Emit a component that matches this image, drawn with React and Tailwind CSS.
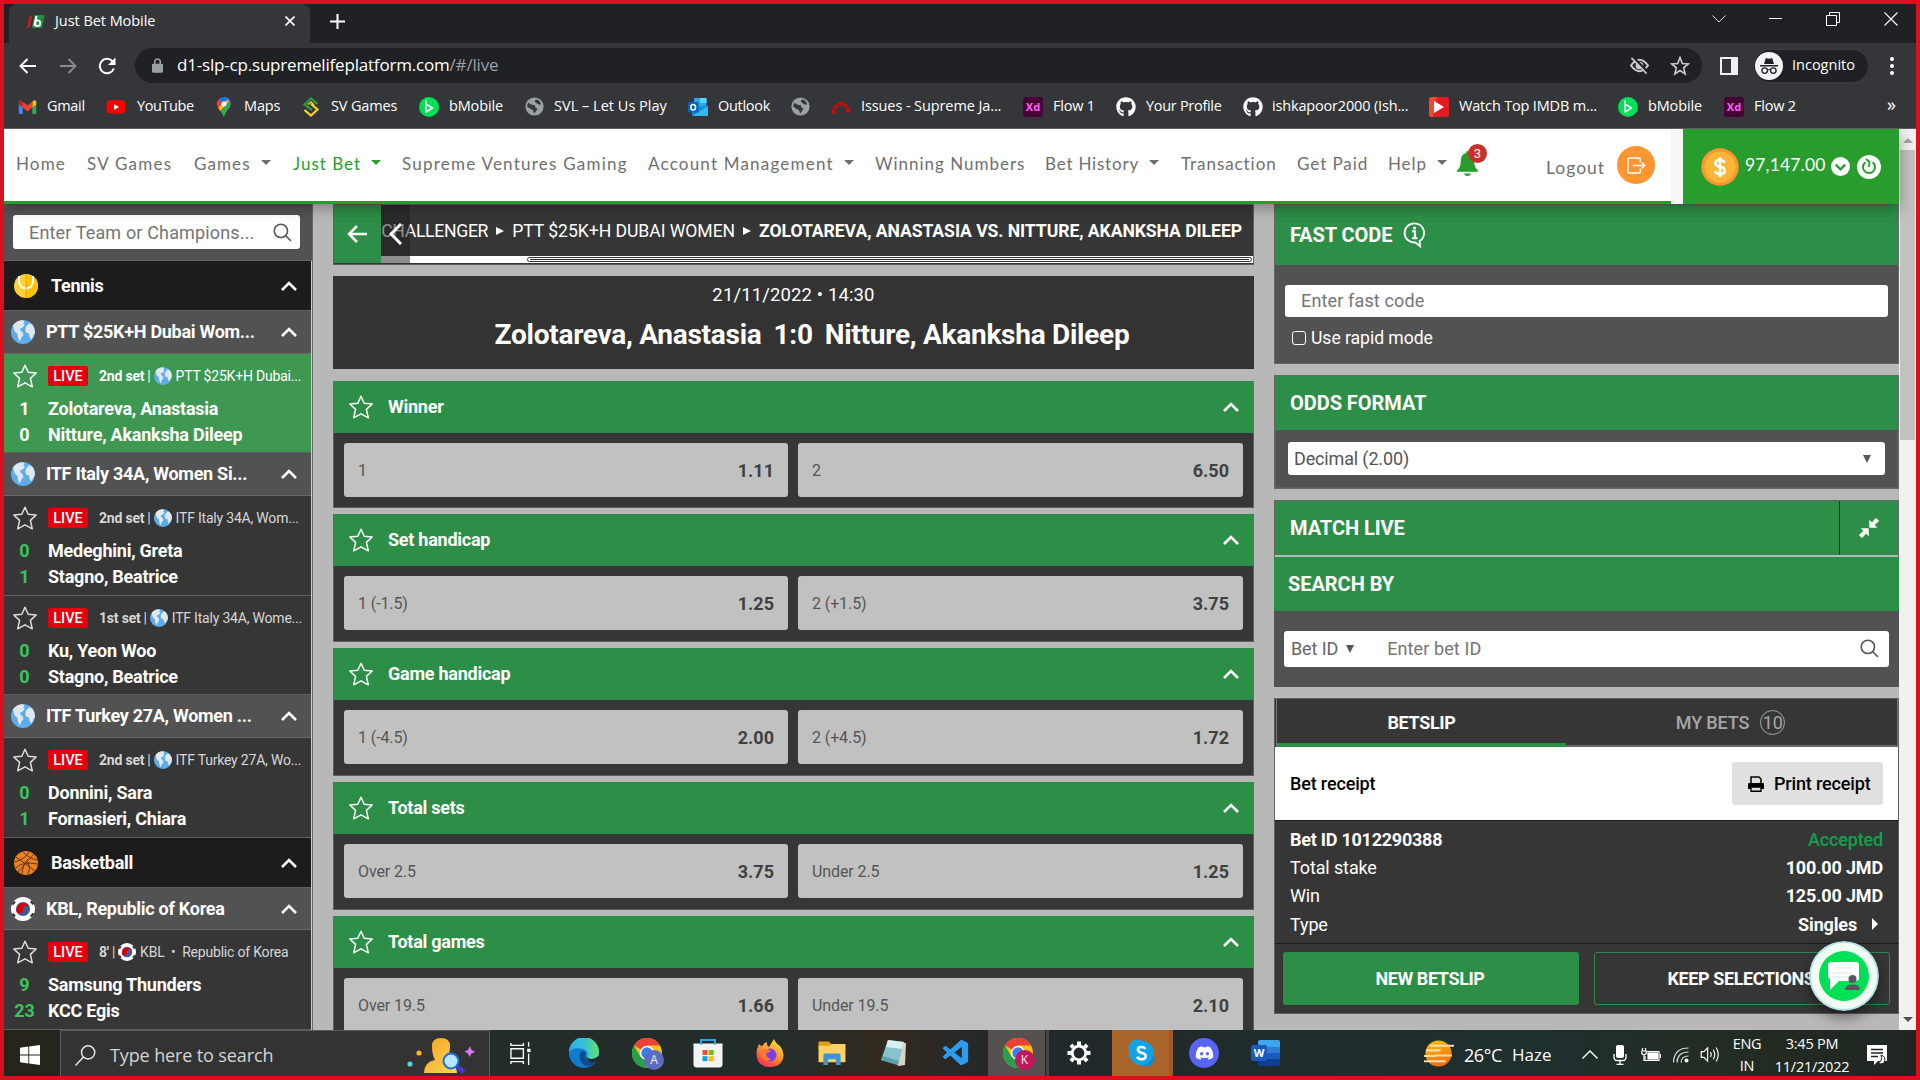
import React from "react";
import { FaGithub, FaDiscord, FaYoutube } from "react-icons/fa";
import { VscVscode } from "react-icons/vsc";

/* ---------- shared glyphs ---------- */

const Star = ({ className = "" }) => (
  <svg viewBox="0 0 26 26" className={"h-[26px] w-[26px] " + className} fill="none" stroke="currentColor" strokeWidth="1.5" strokeLinejoin="round">
    <path d="M13 2.2 L16.2 9.2 L24.2 10 L18.4 15.4 L20.3 23.8 L13 19.8 L5.7 23.8 L7.6 15.4 L1.8 10 L9.8 9.2 Z" />
  </svg>
);

const ChevronUp = () => (
  <svg viewBox="0 0 16 10" className="h-[10px] w-[16px] shrink-0" fill="none" stroke="#fff" strokeWidth="2.6">
    <path d="M1 9 L8 2 L15 9" />
  </svg>
);

const Search = ({ className = "" }) => (
  <svg viewBox="0 0 20 20" className={"h-[19px] w-[19px] " + className} fill="none" stroke="#58595b" strokeWidth="1.7">
    <circle cx="8.3" cy="8.3" r="7" />
    <path d="M13.2 13.2 L19 19" />
  </svg>
);

const Globe = ({ className }) => (
  <svg viewBox="0 0 24 24" className={"shrink-0 " + className}>
    <circle cx="12" cy="12" r="12" fill="#5dadec" />
    <path d="M2 5.5 C4 2 8 0.3 12 0.3 L13.5 1.5 L12.5 3.6 L14 5 L11.5 7.5 L9 8.6 L9.6 10.6 L11.6 12.3 L12.5 15 L10.4 17.6 L9.5 20 L8.5 21.5 L7 17.5 L6.6 14 L3.8 11.4 L2.8 8.6 Z" fill="#e1e8ed" />
    <path d="M15.5 6 L18.5 3 L21.4 4.8 L23.4 8.5 L23.9 13 L22.2 16 L20.4 19.4 L18.6 17 L18 13.6 L15 12.5 L14.2 9 Z" fill="#e1e8ed" />
  </svg>
);

const Korea = ({ className }) => (
  <svg viewBox="0 0 24 24" className={"shrink-0 " + className}>
    <circle cx="12" cy="12" r="12" fill="#fff" />
    <path d="M1.5 7.5 L4 4.6 M19.8 4.2 L22.4 7.4 M1.6 16.6 L4 19.6 M19.9 19.6 L22.4 16.4" stroke="#333" strokeWidth="2.2" />
    <circle cx="12" cy="12" r="7" fill="#3d5a98" />
    <path d="M5.6 15 A7 7 0 0 1 18.8 10.4 A3.6 3.6 0 0 0 12 12 A3.6 3.6 0 0 1 5.6 15 Z" fill="#d80000" />
  </svg>
);

const TennisBall = () => (
  <svg viewBox="0 0 24 24" className="h-6 w-6 shrink-0">
    <circle cx="12" cy="12" r="12" fill="#fdd13a" />
    <path d="M12 0 A12 12 0 0 1 12 24 Z" fill="#fcc400" />
    <path d="M5 2 V8 A7.2 8.5 0 0 0 19 8 V2" fill="none" stroke="#fff" strokeWidth="2" />
    <path d="M12 0 V24" stroke="#d69a00" strokeWidth=".8" />
  </svg>
);

const Basketball = () => (
  <svg viewBox="0 0 24 24" className="h-6 w-6 shrink-0" fill="none" stroke="#5a3210" strokeWidth=".9">
    <circle cx="12" cy="12" r="12" fill="#ea7f27" stroke="none" />
    <path d="M2 6 L21 20 M20 3 L4 21 M9 0.5 Q15 8 23.5 9 M0.5 11 Q12 8 15 0.5 M1.5 17 Q9 10 23.5 13 M8 23 Q9 12 14 8 M14 23.5 Q17 17 14 11" />
  </svg>
);

/* ---------- browser ---------- */

const GmailIcon = () => (
  <svg viewBox="0 0 20 16" className="h-[14px] w-[19px]">
    <path d="M0 2 V14.5 Q0 16 1.5 16 H4.5 V6 Z" fill="#4285f4" />
    <path d="M20 2 V14.5 Q20 16 18.5 16 H15.5 V6 Z" fill="#34a853" />
    <path d="M15.5 2 L17 .7 Q20 -.6 20 2.5 V5 L15.5 8.6 Z" fill="#fbbc04" />
    <path d="M4.5 2 L3 .7 Q0 -.6 0 2.5 V5 L4.5 8.6 Z" fill="#c5221f" />
    <path d="M4.5 2 L10 6.3 L15.5 2 V8.6 L10 13 L4.5 8.6 Z" fill="#ea4335" />
  </svg>
);
const YouTubeIcon = () => <FaYoutube className="h-[20px] w-[20px] text-[#f00] [background:linear-gradient(#fff,#fff)_center/8px_8px_no-repeat]" />;
const MapsIcon = () => (
  <svg viewBox="0 0 14 20" className="ml-[3px] h-[20px] w-[14px]">
    <path d="M7 0 A7 7 0 0 1 13.5 5 L7 10 Z" fill="#4285f4" />
    <path d="M7 0 A7 7 0 0 0 1.4 2.8 L6 7 L11 1.2 Z" fill="#1a73e8" />
    <path d="M1.4 2.8 A7 7 0 0 0 1 10.5 L6.5 5.5 Z" fill="#ea4335" />
    <path d="M1 10.5 Q2 12.3 3.5 14.2 L12 4 L10 3 Z" fill="#fbbc04" />
    <path d="M3.5 14.2 Q5.6 17 7 20 Q8.4 15.5 11 12.5 Q14.8 8.5 13.4 4.6 Z" fill="#34a853" />
    <circle cx="7" cy="7" r="2.5" fill="#fff" />
  </svg>
);
const SvIcon = () => (
  <svg viewBox="0 0 16 20" className="ml-[2px] h-[20px] w-[16px]" fill="none" strokeWidth="2.2">
    <path d="M14.5 7 L8 1.5 L1.5 7.5 L9 13" stroke="#2e9e3d" />
    <path d="M8 7 L14.5 12.5 L8 18.5 L1.5 13" stroke="#ffd21f" />
    <path d="M5 7.5 L8 5 L11 8" stroke="#ffd21f" strokeWidth="1.5" />
  </svg>
);
const BMobileIcon = () => (
  <svg viewBox="0 0 20 20" className="h-5 w-5">
    <circle cx="10" cy="10" r="10" fill="#00e056" />
    <path d="M7 4 V15 L13.5 11 L8.5 8" fill="none" stroke="#fff" strokeWidth="1.5" strokeLinejoin="round" strokeLinecap="round" />
  </svg>
);
const GreyGlobe = () => (
  <svg viewBox="0 0 20 20" className="h-[19px] w-[19px]">
    <circle cx="10" cy="10" r="9.6" fill="#9aa0a6" />
    <path d="M3.5 6 Q7 9 10.5 8.5 Q10 11.5 13 12 Q12 15 9.5 17.5 Q9 13.5 6.5 13 Q3.5 11.5 2 9.5 Z M11 3 Q9.5 5.5 12.5 6.5 Q14 8.5 17 7.5 Q16 4.5 13.5 3 Z" fill="#35363a" />
  </svg>
);
const OutlookIcon = () => (
  <svg viewBox="0 0 20 20" className="h-5 w-5">
    <path d="M6 1 H18.5 V11 H6 Z" fill="#28a8ea" />
    <path d="M12 1 H18.5 V6 H12 Z" fill="#50d9ff" />
    <path d="M4 9 L20 9 V18 Q20 19 19 19 H5 Q4 19 4 18 Z" fill="#1490df" />
    <path d="M20 9 L5 19 H19 Q20 19 20 18 Z" fill="#35b8f1" />
    <rect x="0" y="5" width="10.5" height="10.5" rx="1" fill="#0364b8" />
    <ellipse cx="5.2" cy="10.2" rx="2.4" ry="2.8" fill="none" stroke="#fff" strokeWidth="1.5" />
  </svg>
);
const RedmineIcon = () => (
  <svg viewBox="0 0 20 20" className="h-5 w-5" fill="none" stroke="#c80d0d" strokeWidth="4">
    <path d="M2.2 16.5 A7.9 11.5 0 0 1 17.8 16.5" strokeDasharray="4.2 1.2" />
  </svg>
);
const XdIcon = () => (
  <span className="flex h-5 w-5 items-center justify-center rounded-[3px] bg-[#470137] font-['Open_Sans'] text-[11px] leading-none font-bold text-[#ff61f6]">Xd</span>
);
const GitHubIcon = () => <FaGithub className="h-5 w-5 text-white" />;
const PlayIcon = () => (
  <svg viewBox="0 0 20 20" className="h-5 w-5">
    <rect width="20" height="20" rx="2.5" fill="#e51b23" />
    <path d="M0 3 Q0 0 3 0 H8 L4 20 H3 Q0 20 0 17Z" fill="#f0492c" />
    <path d="M5 4 L15 10 L5 16 Z" fill="#fff" />
  </svg>
);

const bookmarks = [
  ["w-[88px]", GmailIcon, "Gmail", "ml-[10px] tracking-[-0.3px]"],
  ["w-[108px]", YouTubeIcon, "YouTube", "ml-[11px] tracking-[-0.4px]"],
  ["w-[87px]", MapsIcon, "Maps", "ml-[13px] tracking-[-0.15px]"],
  ["w-[118px]", SvIcon, "SV Games", "ml-[12px] tracking-[-0.15px]"],
  ["w-[106px]", BMobileIcon, "bMobile", "ml-[10px] tracking-[-0.15px]"],
  ["w-[163px]", GreyGlobe, "SVL – Let Us Play", "ml-[10px] tracking-[0.02px]"],
  ["w-[103px]", OutlookIcon, "Outlook", "ml-[10px] tracking-[-0.3px]"],
  ["w-[40px]", GreyGlobe, "", ""],
  ["w-[192px]", RedmineIcon, "Issues - Supreme Ja...", "ml-[10px] tracking-[-0.1px]"],
  ["w-[93px]", XdIcon, "Flow 1", "ml-[10px] tracking-[-0.2px]"],
  ["w-[127px]", GitHubIcon, "Your Profile", "ml-[10px] tracking-[-0.3px]"],
  ["w-[186px]", GitHubIcon, "ishkapoor2000 (Ish...", "ml-[9px] tracking-[-0.17px]"],
  ["w-[189px]", PlayIcon, "Watch Top IMDB m...", "ml-[10px] tracking-[-0.17px]"],
  ["w-[106px]", BMobileIcon, "bMobile", "ml-[10px] tracking-[-0.15px]"],
  ["w-[163px]", XdIcon, "Flow 2", "ml-[10px] tracking-[-0.2px]"],
];

const JbIcon = () => (
  <svg viewBox="0 0 20 14" className="h-[13px] w-[19px]">
    <path d="M9 0 H20 L17 14 H6 Z" fill="#1d8f45" />
    <path d="M5 1 L3 11 Q2.5 13 0.5 13" fill="none" stroke="#e3131f" strokeWidth="2.4" />
    <path d="M11 1 L9 12" stroke="#fff" strokeWidth="2.4" />
    <ellipse cx="12.3" cy="8.8" rx="2.8" ry="3" fill="none" stroke="#fff" strokeWidth="2" />
  </svg>
);

function Browser() {
  return (
    <div className="shrink-0 font-['Open_Sans','Noto_Sans',sans-serif] text-white">
      <div className="flex h-[39px] items-stretch justify-between bg-[#202124]">
        <div className="flex">
          <div className="ml-[5px] flex w-[301px] items-center rounded-t-lg bg-[#35363a] pb-[5px] pl-[17px]">
            <JbIcon />
            <span className="ml-[10px] w-[230px] text-[14.5px] tracking-[-0.05px]">Just Bet Mobile</span>
            <svg viewBox="0 0 10 10" className="h-[10px] w-[10px]" stroke="#fff" strokeWidth="1.6">
              <path d="M.5 .5 L9.5 9.5 M9.5 .5 L.5 9.5" />
            </svg>
          </div>
          <svg viewBox="0 0 14 14" className="mt-[10px] ml-[20px] h-[15px] w-[15px]" stroke="#fff" strokeWidth="1.9">
            <path d="M7 0 V14 M0 7 H14" />
          </svg>
        </div>
        <div className="mt-[7px] flex h-[15px] items-center pr-[18px]">
          <svg viewBox="0 0 14 8" className="mr-[43px] h-[8px] w-[14px]" fill="none" stroke="#ddd"><path d="M.5 .5 L7 7 L13.5 .5" /></svg>
          <div className="mr-[44px] h-px w-[13px] bg-white" />
          <svg viewBox="0 0 14 14" className="mr-[44px] h-[14px] w-[14px]" fill="none" stroke="#fff"><path d="M.5 3.5 H10.5 V13.5 H.5 Z M3.5 3.5 V.5 H13.5 V10.5 H10.5" /></svg>
          <svg viewBox="0 0 14 14" className="h-[14px] w-[14px]" stroke="#fff" strokeWidth="1.1"><path d="M.5 .5 L13.5 13.5 M13.5 .5 L.5 13.5" /></svg>
        </div>
      </div>
      <div className="flex h-[45px] items-center bg-[#35363a]">
        <svg viewBox="0 0 17 16" className="ml-[15px] h-[16px] w-[17px]" fill="none" stroke="#fff" strokeWidth="1.9"><path d="M17 8 H1.5 M8.5 1 L1.5 8 L8.5 15" /></svg>
        <svg viewBox="0 0 17 16" className="ml-[24px] h-[16px] w-[17px]" fill="none" stroke="#8a8b8e" strokeWidth="1.9"><path d="M0 8 H15.5 M8.5 1 L15.5 8 L8.5 15" /></svg>
        <svg viewBox="0 0 18 18" className="ml-[21px] h-[18px] w-[18px]" fill="none" stroke="#fff" strokeWidth="2"><path d="M15.8 11.5 A7.2 7.2 0 1 1 14.4 4.2 L16 6" /><path d="M17.5 .5 V8 H10 Z" fill="#fff" stroke="none" /></svg>
        <div className="ml-[19px] flex h-[35px] w-[1567px] items-center rounded-full bg-[#202124] pl-[17px]">
          <svg viewBox="0 0 12 16" className="h-[15px] w-[11px] shrink-0"><rect x="0" y="6" width="12" height="10" rx="1.5" fill="#9aa0a6" /><path d="M3 7 V4 A3 3 0 0 1 9 4 V7" fill="none" stroke="#9aa0a6" strokeWidth="1.7" /></svg>
          <span className="ml-[14px] w-[1453px] shrink-0 pb-px text-[17px] tracking-[-0.19px]">d1-slp-cp.supremelifeplatform.com<span className="text-[#9aa0a6]">/#/live</span></span>
          <svg viewBox="0 0 20 18" className="h-[17px] w-[19px] shrink-0" fill="none" stroke="#c8cacd" strokeWidth="2.2"><path d="M1 9 Q10 -3 19 9 Q10 21 1 9 Z" /><circle cx="10" cy="9" r="3" fill="#c8cacd" /><path d="M3 0 L19 16" stroke="#202124" strokeWidth="2.5" /><path d="M1.5 1 L17.5 17.5" strokeWidth="1.8" /></svg>
          <svg viewBox="0 0 24 24" className="ml-[21px] h-[20px] w-[20px] shrink-0" fill="none" stroke="#c8cacd" strokeWidth="2"><path d="M12 2 L14.8 9 L22 9.5 L16.4 14.2 L18.2 21.5 L12 17.5 L5.8 21.5 L7.6 14.2 L2 9.5 L9.2 9 Z" /></svg>
        </div>
        <div className="ml-[18px] h-[18px] w-[18px] border-[2.5px] border-r-[7px] border-[#f1f1f1]" />
        <div className="ml-[15px] flex h-[34px] w-[116px] items-center rounded-full border border-[#3c3d41] bg-[#202124] pl-[1px]">
          <svg viewBox="0 0 28 28" className="h-[28px] w-[28px] shrink-0"><circle cx="14" cy="14" r="14" fill="#f1f3f4" /><path d="M5 13 H23 V14.6 H5 Z M9 12 L10.8 6 Q14 7.5 17.2 6 L19 12 Z" fill="#202124" /><circle cx="9.7" cy="18.6" r="2.8" fill="none" stroke="#202124" strokeWidth="1.3" /><circle cx="18.3" cy="18.6" r="2.8" fill="none" stroke="#202124" strokeWidth="1.3" /><path d="M12.5 18 Q14 17.2 15.5 18" stroke="#202124" fill="none" /></svg>
          <span className="ml-[9px] pb-0.5 text-[14.5px] tracking-[0px]">Incognito</span>
        </div>
        <div className="ml-[21px] flex flex-col gap-[3px]"><i className="h-[4px] w-[4px] rounded-full bg-white" /><i className="h-[4px] w-[4px] rounded-full bg-white" /><i className="h-[4px] w-[4px] rounded-full bg-white" /></div>
      </div>
      <div className="flex h-[41px] items-center border-b border-[#5b5c5f] bg-[#35363a] pb-[3px] pl-[14px]">
        {bookmarks.map(([w, Icon, label, text], i) => (
          <div key={i} className={"flex shrink-0 items-center " + w}>
            <Icon />
            <span className={"pb-0.5 text-[14.5px] whitespace-nowrap " + text}>{label}</span>
          </div>
        ))}
        <span className="pb-1.5 text-[18px] leading-none">»</span>
      </div>
    </div>
  );
}

/* ---------- site navigation ---------- */

const nav = [
  ["Home", "w-[71px] tracking-[1.15px]"],
  ["SV Games", "w-[107px] tracking-[1.25px]"],
  ["Games", "w-[99px] tracking-[1.1px]", 1],
  ["Just Bet", "w-[109px] tracking-[1px]", 1, 1],
  ["Supreme Ventures Gaming", "w-[246px] tracking-[1.23px]"],
  ["Account Management", "w-[227px] tracking-[1.2px]", 1],
  ["Winning Numbers", "w-[170px] tracking-[0.98px]"],
  ["Bet History", "w-[136px] tracking-[0.8px]", 1],
  ["Transaction", "w-[116px] tracking-[0.93px]"],
  ["Get Paid", "w-[91px] tracking-[0.95px]"],
  ["Help", "w-[70px] tracking-[0.9px]", 1],
];

function SiteNav() {
  return (
    <div className="relative z-10 flex h-[75px] shrink-0 bg-[#f6f6f6] font-['Lato','Open_Sans',sans-serif] text-[17px] tracking-[0.75px] text-[#6f6f6f] shadow-[0_3px_14px_rgba(0,0,0,.35)]">
      <div className="flex w-[1667px] items-center border-b-[3px] border-[#289d2e] bg-white pl-[12px]">
        {nav.map(([t, w, caret, active]) => (
          <div key={t} className={"flex shrink-0 items-center pb-[2px] whitespace-nowrap " + w + (active ? " text-[#289d2e]" : "")}>
            <span>{t}</span>
            {caret && <i className="mt-[-3px] ml-[10px] border-x-[5px] border-t-[5px] border-x-transparent border-t-current" />}
          </div>
        ))}
        <div className="relative -ml-px h-[28px] w-[22px] shrink-0 self-center">
          <svg viewBox="0 0 20 24" className="h-[25px] w-[21px]" fill="#289d2e"><path d="M10 0 Q11.5 0 11.5 2 Q16.5 3.5 16.5 10 Q16.5 16 20 18.5 V20 H0 V18.5 Q3.5 16 3.5 10 Q3.5 3.5 8.5 2 Q8.5 0 10 0 Z M6.5 21.5 H13.5 Q12.5 24 10 24 Q7.5 24 6.5 21.5Z" /></svg>
          <span className="absolute -top-[7px] left-[11px] flex h-[19px] w-[19px] items-center justify-center rounded-full bg-[#c9302c] font-[Roboto] text-[13px] tracking-normal text-white">3</span>
        </div>
        <span className="mt-[6px] ml-[67px] w-[71px] shrink-0 text-[17.5px] tracking-[1px]">Logout</span>
        <div className="flex h-[38px] w-[38px] shrink-0 items-center justify-center rounded-full bg-[#fd9530]">
          <svg viewBox="0 0 20 18" className="h-[17px] w-[19px]" fill="none" stroke="#fff" strokeWidth="1.5" strokeLinejoin="round"><path d="M14 5.5 V2.5 Q14 1 12.5 1 H2.5 Q1 1 1 2.5 V15.5 Q1 17 2.5 17 H12.5 Q14 17 14 15.5 V12.5 M6 9 H18.5 M15.5 5.8 L18.7 9 L15.5 12.2" /></svg>
        </div>
      </div>
      <div className="ml-[12px] flex w-[216px] items-center bg-[#289d2e] pl-[18px] text-white">
        <svg viewBox="0 0 38 38" className="h-[38px] w-[38px]"><circle cx="19" cy="19" r="18.7" fill="#fd9530" /><circle cx="19" cy="19" r="15.5" fill="#ffb636" /><path d="M23.5 14.8 Q22.5 12 19 12 Q14.5 12 14.5 15.3 Q14.5 18.3 19 18.9 Q23.7 19.5 23.7 22.8 Q23.7 26.2 19 26.2 Q15 26.2 14 23 M19 9 V29" fill="none" stroke="#fff" strokeWidth="2.6" /></svg>
        <span className="ml-[6px] w-[86px] pb-0.5 text-[17.5px] tracking-[0.15px]">97,147.00</span>
        <svg viewBox="0 0 20 20" className="h-[19px] w-[19px]"><circle cx="10" cy="10" r="10" fill="#fff" /><path d="M5 8 L10 13 L15 8" stroke="#289d2e" strokeWidth="2.4" fill="none" /></svg>
        <svg viewBox="0 0 24 24" className="ml-[7px] h-[24px] w-[24px]"><circle cx="12" cy="12" r="12" fill="#fff" /><path d="M15.5 7.2 A6 6 0 1 1 8.5 7.2" stroke="#289d2e" strokeWidth="2" fill="none" /><path d="M9 4 L12.5 7 L12 12" fill="none" stroke="#289d2e" strokeWidth="1.8" /></svg>
      </div>
    </div>
  );
}

/* ---------- left column ---------- */

const SportRow = ({ icon, title }) => (
  <div className="flex h-[50px] items-center justify-between border-b border-[#5f5f5f] bg-[#1c1c1c] pr-[14px] pl-[10px]">
    <div className="flex items-center gap-[13px]">
      {icon}
      <span className="pb-px text-[18px] font-bold tracking-[-0.3px]">{title}</span>
    </div>
    <ChevronUp />
  </div>
);

const LeagueRow = ({ icon, title, h = "h-[43px]" }) => (
  <div className={"flex items-center justify-between border-b border-[#666] bg-[#525252] pr-[14px] pl-[7px] " + h}>
    <div className="flex items-center gap-[11px]">
      {icon}
      <span className="pb-px text-[18px] font-bold tracking-[-0.28px] whitespace-nowrap">{title}</span>
    </div>
    <ChevronUp />
  </div>
);

const MatchRow = ({ period, flag, league, teams, active, h = "h-[100px]" }) => (
  <div className={"flex flex-col border-b border-[#5f5f5f] pt-[8px] " + h + (active ? " bg-[#3e9852]" : " bg-[#363636]")}>
    <div className="flex h-[28px] items-center pl-[8px]">
      <Star className={active ? "text-white" : "text-[#ddd]"} />
      <span className="ml-[10px] flex h-[20px] w-[40px] items-center justify-center rounded-[2px] bg-[#e2000f] pt-px text-[14.5px] font-medium">LIVE</span>
      <span className={"ml-[11px] flex items-center text-[14px] tracking-[-0.2px] whitespace-nowrap " + (active ? "text-white" : "text-[#d6d6d6]")}>
        <b className="mr-[3px] font-bold">{period}</b>|<span className="mr-[4px] ml-[3px]">{flag}</span>{league}
      </span>
    </div>
    <div className="mt-[5px]">
      {teams.map(([s, n]) => (
        <div key={n} className="flex h-[26px] items-center text-[18px] font-bold">
          <span className={"w-[41px] text-center " + (active ? "text-white" : "text-[#3ac45e]")}>{s}</span>
          <span className="ml-[3px] tracking-[-0.24px]">{n}</span>
        </div>
      ))}
    </div>
  </div>
);

function Sidebar() {
  const g = <Globe className="h-6 w-6" />;
  const gs = <Globe className="h-[18px] w-[18px]" />;
  return (
    <div className="flex w-[309px] shrink-0 flex-col border-r border-[#666] bg-[#525252]">
      <div className="h-[57px] shrink-0 border-b border-[#666] pt-[11px] pl-[9px]">
        <div className="flex h-[34px] w-[287px] items-center justify-between rounded-[3px] bg-white pr-[8px] pl-[16px] text-[18px] text-[#757575]">
          <span className="tracking-[0.15px]">Enter Team or Champions...</span>
          <Search />
        </div>
      </div>
      <div className="w-[308px] border-r border-[#ccc]">
        <SportRow icon={<TennisBall />} title="Tennis" />
        <LeagueRow icon={g} title="PTT $25K+H Dubai Wom..." />
        <MatchRow active h="h-[99px]" period="2nd set" flag={gs} league="PTT $25K+H Dubai..." teams={[["1", "Zolotareva, Anastasia"], ["0", "Nitture, Akanksha Dileep"]]} />
        <LeagueRow icon={g} title="ITF Italy 34A, Women Si..." />
        <MatchRow period="2nd set" flag={gs} league="ITF Italy 34A, Wom..." teams={[["0", "Medeghini, Greta"], ["1", "Stagno, Beatrice"]]} />
        <MatchRow h="h-[99px]" period="1st set" flag={gs} league="ITF Italy 34A, Wome..." teams={[["0", "Ku, Yeon Woo"], ["0", "Stagno, Beatrice"]]} />
        <LeagueRow icon={g} title="ITF Turkey 27A, Women ..." />
        <MatchRow period="2nd set" flag={gs} league="ITF Turkey 27A, Wo..." teams={[["0", "Donnini, Sara"], ["1", "Fornasieri, Chiara"]]} />
        <SportRow icon={<Basketball />} title="Basketball" />
        <LeagueRow h="h-[42px]" icon={<Korea className="h-6 w-6" />} title="KBL, Republic of Korea" />
        <MatchRow period="8'" flag={<Korea className="h-[18px] w-[18px]" />} league={<span>KBL&nbsp; •&nbsp; Republic of Korea</span>} teams={[["9", "Samsung Thunders"], ["23", "KCC Egis"]]} />
      </div>
    </div>
  );
}

/* ---------- centre column ---------- */

const Odd = ({ label, value, w }) => (
  <div className={"flex h-[54px] items-center justify-between rounded-[3px] bg-[#c1c1c1] pr-[14px] pl-[14px] text-[#454545] " + w}>
    <span className="pt-px text-[16px] tracking-[-0.1px] text-[#555]">{label}</span>
    <span className="pt-px text-[18px] font-bold text-[#404040]">{value}</span>
  </div>
);

const Market = ({ title, a, b, h = "h-[128px]" }) => (
  <div className={"mb-[6px] shrink-0 border border-[#5f5f5f] bg-[#363636] " + h}>
    <div className="-mx-px -mt-px flex h-[52px] items-center justify-between bg-[#2d8e47] pr-[15px] pl-[15px]">
      <div className="flex items-center">
        <Star className="text-white" />
        <span className="ml-[14px] pb-px text-[18px] font-bold tracking-[-0.25px]">{title}</span>
      </div>
      <ChevronUp />
    </div>
    <div className="flex gap-[10px] pt-[10px] pl-[10px]">
      <Odd w="w-[444px]" label={a[0]} value={a[1]} />
      <Odd w="w-[445px]" label={b[0]} value={b[1]} />
    </div>
  </div>
);

const Arrow = () => <i className="mx-[8px] border-y-[4.5px] border-l-[8px] border-y-transparent border-l-white" />;

function Center() {
  return (
    <div className="ml-[20px] flex w-[921px] shrink-0 flex-col">
      <div className="flex h-[61px] shrink-0 border border-[#5f5f5f] bg-[#363636]">
        <div className="flex h-[58px] w-[47px] shrink-0 items-center justify-center bg-[#2d8e47] pr-px">
          <svg viewBox="0 0 20 18" className="h-[18px] w-[20px]" fill="none" stroke="#fff" strokeWidth="2.5"><path d="M20 9 H2 M10 1 L2 9 L10 17" /></svg>
        </div>
        <div className="relative flex h-[58px] flex-1 flex-col justify-between overflow-hidden">
          <div className="flex h-[51px] items-center justify-end pt-px pr-[11px] text-[17.6px] tracking-[-0.05px] whitespace-nowrap">
            <span className="tracking-[-0.3px]">CHALLENGER</span><Arrow /><span>PTT $25K+H DUBAI WOMEN</span><Arrow /><b className="tracking-[-0.07px]">ZOLOTAREVA, ANASTASIA VS. NITTURE, AKANKSHA DILEEP</b>
          </div>
          <div className="flex h-[7px] items-center justify-end bg-white pr-px">
            <div className="flex h-[5px] w-[725px] items-center rounded-full border border-[#333] bg-white px-[2px]"><i className="h-px w-full bg-[#333]" /></div>
          </div>
          <div className="absolute inset-y-0 left-0 flex w-[29px] items-center justify-center bg-[#1e1e1e]/50">
            <svg viewBox="0 0 13 22" className="h-[22px] w-[13px]" fill="none" stroke="#fff" strokeWidth="3"><path d="M12 1 L2 11 L12 21" /></svg>
          </div>
        </div>
      </div>
      <div className="mt-[11px] flex h-[93px] shrink-0 flex-col items-center bg-[#333]">
        <span className="mt-[6px] text-[18.5px] leading-[27px] tracking-[0.13px]">21/11/2022 • 14:30</span>
        <span className="mt-[9px] flex gap-[12px] pl-[37px] text-[28px] leading-[34px] font-bold tracking-[-0.27px] whitespace-nowrap"><span>Zolotareva, Anastasia</span><span>1:0</span><span>Nitture, Akanksha Dileep</span></span>
      </div>
      <div className="mt-[12px] flex flex-col">
        <Market h="h-[127px]" title="Winner" a={["1", "1.11"]} b={["2", "6.50"]} />
        <Market title="Set handicap" a={["1 (-1.5)", "1.25"]} b={["2 (+1.5)", "3.75"]} />
        <Market title="Game handicap" a={["1 (-4.5)", "2.00"]} b={["2 (+4.5)", "1.72"]} />
        <Market title="Total sets" a={["Over 2.5", "3.75"]} b={["Under 2.5", "1.25"]} />
        <Market title="Total games" a={["Over 19.5", "1.66"]} b={["Under 19.5", "2.10"]} />
      </div>
    </div>
  );
}

/* ---------- right column ---------- */

const Head = ({ children, className = "" }) => (
  <div className={"flex items-center bg-[#2d8e47] text-[20px] font-bold tracking-[-0.05px] " + className}>{children}</div>
);

const Triangle = () => <i className="border-x-[4.5px] border-t-[8px] border-x-transparent border-t-[#555]" />;

const ReceiptRow = ({ label, value, strong, green }) => (
  <div className="flex h-[28.3px] items-center justify-between text-[18px]">
    <span className={strong ? "font-bold tracking-[-0.25px]" : "tracking-[-0.12px]"}>{label}</span>
    <span className={"flex items-center font-bold tracking-[-0.15px] " + (green ? "!font-medium text-[#12a04b]" : "")}>{value}</span>
  </div>
);

function Right() {
  return (
    <div className="ml-[20px] flex w-[625px] shrink-0 flex-col">
      <div className="h-[160px] shrink-0 border border-[#666] bg-[#525252]">
        <Head className="h-[60px] pl-[15px]">
          FAST CODE
          <svg viewBox="0 0 24 28" className="ml-[11px] h-[26px] w-[23px]" fill="none" stroke="#fff" strokeWidth="2"><path d="M12 1.5 A10.3 10.3 0 1 0 13 22 L18 26 L17.5 20.5 A10.3 10.3 0 0 0 12 1.5 Z" /><path d="M9.5 10 H12.5 V17 M9.5 17.3 H15" strokeWidth="2.4" /><circle cx="12" cy="6.5" r="1.7" fill="#fff" stroke="none" /></svg>
        </Head>
        <div className="mt-[20px] ml-[10px] flex h-[32px] w-[603px] items-center rounded-[3px] bg-white pb-px pl-[16px] text-[18px] tracking-[0.15px] text-[#757575]">Enter fast code</div>
        <div className="mt-[9px] ml-[17px] flex h-[24px] items-center gap-[5px] text-[17.6px] tracking-[-0.05px]">
          <i className="h-[14px] w-[14px] rounded-[3px] border-[1.5px] border-white" />Use rapid mode
        </div>
      </div>
      <div className="mt-[11px] h-[114px] shrink-0 border border-[#666] bg-[#525252]">
        <Head className="h-[54px] pl-[15px]">ODDS FORMAT</Head>
        <div className="h-[58px] border border-t-0 border-[#5e5e5e] pt-[12px] pl-[12px]">
          <div className="flex h-[33px] w-[597px] items-center justify-between rounded-[3px] bg-white pr-[14px] pl-[6px] text-[18px] tracking-[-0.15px] text-[#555]"><span>Decimal (2.00)</span><Triangle /></div>
        </div>
      </div>
      <div className="mt-[11px] h-[57px] shrink-0 border border-b-0 border-[#666]">
        <div className="flex h-[55px] border-b border-[#b8b8b8] bg-[#2d8e47]">
          <Head className="w-[565px] border-r border-[#223] pl-[15px]">MATCH LIVE</Head>
          <div className="flex flex-1 items-center justify-center">
            <svg viewBox="0 0 20 20" className="h-[20px] w-[20px]" fill="#fff"><path d="M10.7 9.3 V2.5 L13 4.8 L17 .3 L19.7 3 L15.2 7 L17.5 9.3 Z M9.3 10.7 V17.5 L7 15.2 L3 19.7 L.3 17 L4.800 13 L2.5 10.7 Z" stroke="#fff" strokeWidth=".8" /></svg>
          </div>
        </div>
      </div>
      <Head className="h-[54px] shrink-0 pl-[14px]">SEARCH BY</Head>
      <div className="h-[76px] shrink-0 bg-[#525252] pt-[20px] pl-[10px]">
        <div className="flex h-[36px] w-[605px] items-center rounded-[3px] bg-white pr-[10px] pb-px pl-[7px] text-[18px] text-[#757575]">
          <span className="tracking-[-0.1px] text-[#666]">Bet ID</span><span className="ml-[8px] flex w-[41px]"><Triangle /></span>
          <span className="flex-1 tracking-[0.1px]">Enter bet ID</span>
          <Search />
        </div>
      </div>
      <div className="mt-[11px] h-[316px] shrink-0 border border-[#5f5f5f] bg-[#363636]">
        <div className="ml-px flex h-[48px] border-x border-[#777] text-[18px] font-bold tracking-[-0.35px]">
          <div className="flex w-[289px] items-center justify-center border-b-4 border-[#2d8e47] pt-0.5">BETSLIP</div>
          <div className="flex flex-1 items-center justify-center border-b-2 border-[#666] pr-0.5 font-medium tracking-[-0.15px] text-[#a6a6a6]">
            MY BETS<span className="ml-[11px] flex h-[25px] w-[25px] items-center justify-center rounded-full border border-[#a6a6a6] font-normal">10</span>
          </div>
        </div>
        <div className="flex h-[74px] items-center justify-between border-b border-[#1a1a1a] bg-white pr-[15px] pl-[15px] text-[18px] font-medium tracking-[-0.15px] text-black">
          Bet receipt
          <div className="flex h-[43px] w-[151px] items-center rounded-[3px] bg-[#e0e0e0] pl-[15px]">
            <svg viewBox="0 0 18 16" className="mr-[9px] h-[16px] w-[18px]"><path d="M4 7 V1 H12 L14 3 V7" fill="none" stroke="#000" strokeWidth="1.5" /><path d="M1 8 Q1 7 2 7 H16 Q17 7 17 8 V13 H1 Z" /><path d="M4 11 H14 V15.2 H4 Z" fill="#e0e0e0" stroke="#000" strokeWidth="1.4" /></svg>
            <span>Print receipt</span>
          </div>
        </div>
        <div className="h-[123px] border-b border-[#1a1a1a] px-[15px] pt-[4px]">
          <ReceiptRow strong label="Bet ID 1012290388" value="Accepted" green />
          <ReceiptRow label="Total stake" value="100.00 JMD" />
          <ReceiptRow label="Win" value="125.00 JMD" />
          <ReceiptRow label="Type" value={<>Singles<i className="mr-[5px] ml-[15px] border-y-[6px] border-l-[6px] border-y-transparent border-l-white" /></>} />
        </div>
        <div className="relative flex gap-[15px] px-[8px] pt-[8px] text-[18px] font-bold tracking-[-0.4px]">
          <div className="flex h-[53px] w-[296px] items-center justify-center rounded-[3px] bg-[#2d8e47] pr-0.5">NEW BETSLIP</div>
          <div className="flex h-[53px] w-[296px] items-center justify-center rounded-[3px] border border-[#2d8e47] pr-0.5">KEEP SELECTIONS</div>
          <svg viewBox="0 0 70 70" className="absolute -top-[3px] left-[534px] h-[70px] w-[70px] rounded-full shadow-[0_6px_14px_rgba(0,0,0,.45)]">
            <circle cx="35" cy="35" r="34" fill="#effff2" stroke="#b5dfe6" strokeWidth="2" />
            <circle cx="35" cy="35" r="25" fill="#00e056" />
            <path d="M22 21 H47 Q50 21 50 24 V37 Q50 40 47 40 H30 L21 49 V38 Q19 37.5 19 35 V24 Q19 21 22 21 Z" fill="#fff" />
            <path d="M26 27 H42 M23 32 H44 M23 36 H40" stroke="#dfe3ea" strokeWidth="1.2" />
            <circle cx="43.5" cy="38" r="4" fill="#5d5463" />
            <path d="M36 49 Q36 43.5 43.5 43.5 Q51 43.5 51 49 Z" fill="#5d5463" />
          </svg>
        </div>
      </div>
    </div>
  );
}

/* ---------- taskbar ---------- */

const Chrome = ({ letter, color }) => (
  <div className="relative h-[30px] w-[30px]">
    <svg viewBox="0 0 30 30" className="h-[30px] w-[30px]">
      <circle cx="15" cy="15" r="15" fill="#fbc116" />
      <path d="M15 15 L2 7.5 A15 15 0 0 1 28 7.5 H15 Z" fill="#ea4335" />
      <path d="M2 7.5 A15 15 0 0 0 15 30 L21.5 18.7 L8.5 18.7 Z" fill="#279f4b" />
      <circle cx="15" cy="15" r="7.2" fill="#fff" /><circle cx="15" cy="15" r="5.7" fill="#3b7ded" />
    </svg>
    <span className={"absolute top-[12px] left-[12px] flex h-[20px] w-[20px] items-center justify-center rounded-full text-[12px] text-white/90 " + color}>{letter}</span>
  </div>
);

const EdgeIcon = () => (
  <svg viewBox="0 0 30 30" className="h-[30px] w-[30px]">
    <defs>
      <linearGradient id="edgeTop" x1="0" x2="1"><stop offset="0" stopColor="#2ab0e4" /><stop offset=".5" stopColor="#35c1d8" /><stop offset="1" stopColor="#63e06a" /></linearGradient>
    </defs>
    <circle cx="15" cy="15" r="15" fill="#0f7cd2" />
    <path d="M0 14 A15 15 0 0 1 30 14 Q30 21 22.5 21 Q17 21 18 17.5 Q19.5 13 14 11 Q5 8.5 0 14 Z" fill="url(#edgeTop)" />
    <path d="M12 13 Q8 22 15 27 Q22 30 28 23 Q18 26 16 18.5 Q15.5 16 17 14 Z" fill="#114a8b" />
    <path d="M18 18 Q18 21 22.5 21 Q27 21 30.5 17 Q31 22 28 23.5 Q20 26 17.5 20 Z" fill="#26292a" />
  </svg>
);
const StoreIcon = () => (
  <svg viewBox="0 0 30 30" className="h-[30px] w-[30px]">
    <path d="M.5 5.5 H29.5 V26 Q29.5 29.5 26 29.5 H4 Q.5 29.5 .5 26 Z" fill="#f3f3f3" />
    <path d="M8 6.500 V2 H22 V6.500" fill="none" stroke="#22a7ee" strokeWidth="2" />
    <path d="M9.5 12 H14.5 V17 H9.5Z" fill="#f25022" /><path d="M15.7 12 H20.7 V17 H15.7Z" fill="#7fba00" /><path d="M9.5 18.2 H14.5 V23.2 H9.5Z" fill="#00a4ef" /><path d="M15.7 18.2 H20.7 V23.2 H15.7Z" fill="#ffb900" />
  </svg>
);
const FirefoxIcon = () => (
  <svg viewBox="0 0 30 30" className="h-[30px] w-[30px]">
    <defs><linearGradient id="fox" x1=".8" y1="0" x2=".2" y2="1"><stop offset="0" stopColor="#ffe838" /><stop offset=".45" stopColor="#ff9a2a" /><stop offset="1" stopColor="#f4235a" /></linearGradient></defs>
    <path d="M4 6 Q5 8 7.5 8 Q9 4.5 12 4 Q11 7 14 9 L19 1 Q21 6 25 8 Q29 13 28.5 18 Q27 29 15 29 Q2 29 1.5 16 Q1.5 10 4 6 Z" fill="url(#fox)" />
    <circle cx="15" cy="17" r="6.5" fill="#7a3ff0" />
    <path d="M7 13 Q11 9 16 13 Q14 15 11 15 Q11 20 16 21 Q12 25 8 21 Q5 17 7 13Z" fill="#ff7b2a" />
  </svg>
);
const FolderIcon = () => (
  <svg viewBox="0 0 28 26" className="h-[25px] w-[28px]"><path d="M0 1.5 Q0 .5 1 .5 H11 L13 3 H27 V8 H0 Z" fill="#e0a010" /><path d="M0 5 H12 L14 3 H28 V22 H0 Z" fill="#ffd262" /><path d="M5 25 V15 Q5 13 7 13 H21 Q23 13 23 15 V25 H18 V19 H10 V25 Z" fill="#3a95dc" /></svg>
);
const NotepadIcon = () => (
  <svg viewBox="0 0 28 28" className="h-[28px] w-[28px]"><path d="M8 2 L26 4 L25 26 L18 27 Z" fill="#d9d3c4" /><path d="M8 1 L24 3 L18 26 L1 21 Z" fill="#86c3cc" /><path d="M8 1 L24 3 L22 10 L6 8 Z" fill="#d8eef0" /><path d="M1 21 L18 26 L19 22 L3 17Z" fill="#5da0ab" /></svg>
);
const SkypeIcon = () => (
  <svg viewBox="0 0 28 30" className="h-[28px] w-[27px]"><circle cx="9.5" cy="10" r="9.5" fill="#12a5ea" /><circle cx="18.5" cy="20" r="9.5" fill="#0a88dc" /><circle cx="14" cy="15" r="13" fill="#0fa3ea" /><path d="M18.2 10.5 Q17 8.5 14 8.5 Q10.2 8.5 10.2 11.5 Q10.2 14 14 14.8 Q18.5 15.7 18.5 18.5 Q18.5 21.7 14 21.7 Q10.5 21.7 9.5 19" fill="none" stroke="#fff" strokeWidth="2.8" /></svg>
);
const WordIcon = () => (
  <div className="relative h-[26px] w-[29px]">
    <div className="ml-[7px] flex h-[26px] w-[22px] flex-col overflow-hidden rounded-[2px]"><i className="h-[7px] bg-[#41a5ee]" /><i className="h-[6px] bg-[#2b7cd3]" /><i className="h-[6px] bg-[#185abd]" /><i className="h-[7px] bg-[#103f91]" /></div>
    <span className="absolute top-[5px] left-0 flex h-[16px] w-[16px] items-center justify-center rounded-[2px] bg-[#185abd] text-[11px] font-bold text-white">W</span>
  </div>
);
const Gear = () => (
  <svg viewBox="0 0 24 24" className="h-[24px] w-[24px]" fill="none" stroke="#fff"><circle cx="12" cy="12" r="6.8" strokeWidth="2.8" /><g strokeWidth="4"><path d="M12 0.5 V4 M12 20 V23.5 M.5 12 H4 M20 12 H23.5 M3.9 3.9 L6.3 6.3 M17.7 17.7 L20.1 20.1 M3.9 20.1 L6.3 17.7 M17.7 6.3 L20.1 3.9" /></g></svg>
);
const TaskViewIcon = () => (
  <svg viewBox="0 0 22 24" className="h-[23px] w-[21px]" fill="none" stroke="#fff" strokeWidth="1.4"><path d="M1 7 H14 V17 H1 Z M1 1 V3.5 H14 V1 M1 23 V20.5 H14 V23 M19.5 0 V5 M19.5 12 V24" /><path d="M18 7 H21.5 V10.5 H18Z" fill="#fff" stroke="none" /></svg>
);
const PersonArt = () => (
  <svg viewBox="0 0 68 46" className="h-[46px] w-[68px]">
    <defs><linearGradient id="gold" x1="0" x2="1" y2="1"><stop offset="0" stopColor="#f5a21f" /><stop offset="1" stopColor="#ffd75a" /></linearGradient></defs>
    <path d="M25 15 Q25 7 34 7 Q43 7 43 15 Q43 24 39 28 Q50 31 50 42 H17 Q17 31 28 29 Q25 24 25 15 Z" fill="url(#gold)" />
    <path d="M50 36 L57 41" stroke="#4639c9" strokeWidth="5" /><circle cx="44" cy="30" r="7.5" fill="#b8e6fa" stroke="#1f6fd0" strokeWidth="2" />
    <circle cx="12" cy="22" r="2.6" fill="#ffb31f" /><circle cx="3" cy="33" r="2.6" fill="#5ad0e0" />
    <path d="M63 15 L64.5 19 L68 21 L64.5 22.5 L62.5 26 L61 22.5 L57.5 20.5 L61 19 Z" fill="#d978f5" />
  </svg>
);
const WeatherIcon = () => (
  <svg viewBox="0 0 30 26" className="h-[27px] w-[31px]"><defs><linearGradient id="sun" x1="0" x2=".3" y2="1"><stop offset="0" stopColor="#ffc400" /><stop offset="1" stopColor="#f0700f" /></linearGradient></defs><circle cx="15" cy="13" r="12.7" fill="url(#sun)" /><path d="M7 5.5 H30 M3 10 H17 M12 15 H28 M1 15.5 H12 M1 20.5 H22" stroke="#f3dcae" strokeWidth="2" /></svg>
);

const Slot = ({ w, bg = "", children }) => <div className={"flex h-full shrink-0 items-center justify-center " + w + " " + bg}>{children}</div>;

function Taskbar() {
  return (
    <div className="flex h-[46px] shrink-0 items-center bg-[linear-gradient(90deg,#26241b_0%,#222d2b_28%,#222d2b_40%,#33291e_46%,#22282a_52%,#1f2c2c_70%,#1f2f2f_80%,#232c22_90%,#1f2622_100%)] font-['Open_Sans','Noto_Sans',sans-serif] text-white">
      <Slot w="w-[56px]">
        <svg viewBox="0 0 20 20" className="mt-[4px] ml-[-4px] h-[20px] w-[20px]" fill="#fff"><path d="M0 2.7 L8.3 1.5 V9.5 H0 Z M9.2 1.4 L20 0 V9.5 H9.2 Z M0 10.5 H8.3 V18.5 L0 17.3 Z M9.2 10.5 H20 V20 L9.2 18.6 Z" /></svg>
      </Slot>
      <div className="flex h-full w-[430px] shrink-0 items-center border border-b-0 border-[#5a5d5c] bg-[#333] pl-[14px]">
        <svg viewBox="0 0 20 20" className="mt-[3px] h-[21px] w-[21px]" fill="none" stroke="#e8e8e8" strokeWidth="1.4"><circle cx="12.5" cy="7" r="6.3" /><path d="M8 11.5 L.5 19.5" /></svg>
        <span className="mt-[4px] ml-[14px] w-[297px] text-[18px] tracking-[-0.12px] text-[#d4d4d4]">Type here to search</span>
        <PersonArt />
      </div>
      <Slot w="w-[60px]"><TaskViewIcon /></Slot>
      <Slot w="w-[68px]"><EdgeIcon /></Slot>
      <Slot w="w-[58px]"><Chrome letter="A" color="bg-[#5c6bc0]" /></Slot>
      <Slot w="w-[63px]"><StoreIcon /></Slot>
      <Slot w="w-[62px]"><FirefoxIcon /></Slot>
      <Slot w="w-[62px]"><FolderIcon /></Slot>
      <Slot w="w-[61px]"><NotepadIcon /></Slot>
      <Slot w="w-[64px]"><VscVscode className="h-[31px] w-[31px] text-[#2a9df0]" /></Slot>
      <Slot w="w-[57px]" bg="bg-[#555150]"><div className="ml-[2px]"><Chrome letter="K" color="bg-[#c2185b]" /></div></Slot>
      <Slot w="w-[4px]" bg="border-l border-[#222] bg-[#444]" />
      <Slot w="w-[63px]"><div className="mr-[3px]"><Gear /></div></Slot>
      <Slot w="w-[61px]" bg="border-r-4 border-[#9c5a24] bg-[#a9652b]"><div className="ml-[2px]"><SkypeIcon /></div></Slot>
      <Slot w="w-[62px]"><span className="flex h-[30px] w-[30px] items-center justify-center rounded-full bg-[#5865f2]"><FaDiscord className="h-[18px] w-[19px] text-white" /></span></Slot>
      <Slot w="w-[61px]"><WordIcon /></Slot>
      <div className="flex flex-1 items-center">
        <span className="ml-[127px]"><WeatherIcon /></span>
        <span className="mt-[4px] ml-[10px] w-[48px] shrink-0 text-[18px] tracking-[-0.45px]">26°C</span>
        <span className="mt-[4px] w-[70px] shrink-0 text-[17px] tracking-[0.05px]">Haze</span>
        <svg viewBox="0 0 16 9" className="mt-[3px] h-[9px] w-[16px] shrink-0" fill="none" stroke="#fff" strokeWidth="1.4"><path d="M.5 8.5 L8 1 L15.5 8.5" /></svg>
        <svg viewBox="0 0 14 20" className="mt-[3px] ml-[15px] h-[20px] w-[14px] shrink-0" fill="#fff"><rect x="3" y="0" width="8" height="13" rx="2" /><path d="M1 9 V12 Q1 15.5 4 15.5 H10 Q13 15.5 13 12 V9 M7 15.5 V19 M3.5 19.3 H10.5" fill="none" stroke="#fff" strokeWidth="1.3" /></svg>
        <svg viewBox="0 0 20 14" className="mt-[3px] ml-[14px] h-[14px] w-[20px] shrink-0" fill="none" stroke="#fff" strokeWidth="1.2"><path d="M6 3.5 H18 V12.5 H4 V8" /><rect x="7" y="5" width="9.5" height="6" fill="#fff" /><path d="M19.4 6 V10 M1.5 0 V3 M4.5 0 V3 M.8 3 H5.2 V5.5 Q3 8 .8 5.5 Z M3 7 V12.5 H5" /></svg>
        <svg viewBox="0 0 16 16" className="mt-[4px] ml-[12px] h-[16px] w-[16px] shrink-0" fill="none" stroke="#ddd" strokeWidth="1.2"><path d="M.5 15.5 Q1 1 15.5 1 M4 15.5 Q4.5 5 15.5 5 M8 15.5 Q8.5 9 15.5 9" /><circle cx="13.5" cy="13.5" r="2" fill="#fff" stroke="none" /></svg>
        <svg viewBox="0 0 20 18" className="mt-[3px] ml-[11px] h-[17px] w-[20px] shrink-0" fill="none" stroke="#fff" strokeWidth="1.2"><path d="M.7 6 H3.5 L7.5 2 V16 L3.5 12 H.7 Z M10.5 6.5 Q12 9 10.5 11.5 M13.5 4 Q16.5 9 13.5 14 M16.5 1.5 Q21 9 16.5 16.5" /></svg>
        <div className="mt-[4px] ml-[8px] flex w-[38px] shrink-0 flex-col items-center text-[14.5px] leading-[22px] tracking-[-0.35px]"><span>ENG</span><span>IN</span></div>
        <div className="mt-[3px] ml-[3px] flex w-[86px] shrink-0 flex-col items-center text-[14.5px] leading-[23px] tracking-[-0.25px] whitespace-nowrap"><span>3:45 PM</span><span>11/21/2022</span></div>
        <svg viewBox="0 0 20 20" className="mt-[3px] ml-[12px] h-[20px] w-[20px] shrink-0"><path d="M0 0 H20 V16 H11 L7 20 V16 H0 Z" fill="#fff" /><path d="M4 4.5 H16 M4 8 H16 M4 11.5 H11" stroke="#222" strokeWidth="1.3" /><path d="M14 10 Q20 12 17 18 Q14 20 11 18 Q16 16 14 10Z" fill="#fff" stroke="#222" /></svg>
      </div>
    </div>
  );
}

export default function App() {
  return (
    <div className="flex h-[1080px] w-[1920px] flex-col overflow-hidden border-4 border-[#d81120] bg-[#b8b8b8]">
      <Browser />
      <div className="flex h-[901px] shrink-0 overflow-hidden">
        <div className="flex w-[1895px] shrink-0 flex-col">
          <SiteNav />
          <div className="flex flex-1 overflow-hidden font-['Roboto',sans-serif] leading-normal text-white">
            <Sidebar />
            <Center />
            <Right />
          </div>
        </div>
        <div className="flex flex-1 flex-col items-center bg-[#f1f1f1]">
          <i className="mt-[9px] border-x-[5px] border-b-[5px] border-x-transparent border-b-[#a3a3a3]" />
          <div className="mt-[7px] h-[290px] w-[15px] bg-[#c1c1c1]" />
          <i className="mt-[577px] border-x-[5px] border-t-[5px] border-x-transparent border-t-[#505050]" />
        </div>
      </div>
      <Taskbar />
    </div>
  );
}
